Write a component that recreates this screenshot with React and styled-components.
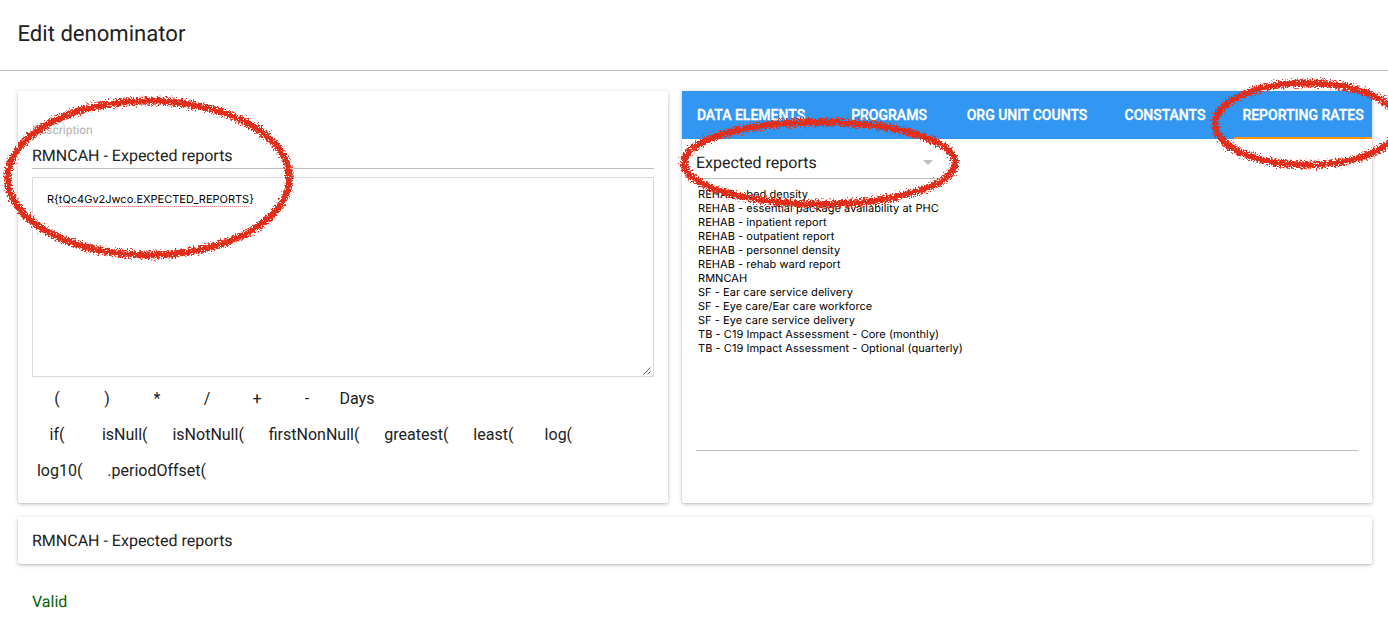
import React from "react";
import styled, { createGlobalStyle } from "styled-components";

const GlobalStyle = createGlobalStyle`
  *, *::before, *::after { box-sizing: border-box; }
  body {
    margin: 0;
    background: #fff;
    color: #212121;
    font: 400 16px/20px Roboto, "Liberation Sans", sans-serif;
    text-rendering: geometricPrecision;
    overflow: hidden;
  }
`;

const Page = styled.div`
  position: relative;
  height: 620px;
  overflow: hidden;
`;

const Header = styled.header`
  height: 71px;
  padding: 19px 17.5px 0;
  border-bottom: 1px solid #bdbdbd;
`;

const Title = styled.h1`
  margin: 0;
  font-size: 22.1px;
  line-height: 30px;
  font-weight: 400;
`;

const Content = styled.main`
  display: grid;
  grid-template-columns: 650px 690px;
  grid-template-rows: 412px 47px;
  gap: 14px;
  padding: 20px 16px 0 18px;
`;

const Card = styled.section`
  background: #fff;
  border-radius: 2px;
  box-shadow: 0 1px 5px rgba(0, 0, 0, 0.2), 0 1px 2px rgba(0, 0, 0, 0.12);
`;

const EditorCard = styled(Card)`
  padding: 32px 14px 0;
`;

const Label = styled.label`
  display: block;
  height: 14px;
  font-size: 12px;
  line-height: 14px;
  color: #b3b3b3;
`;

const Field = styled.div`
  height: 32px;
  padding-top: 9px;
  border-bottom: 1px solid #bdbdbd;
`;

const Formula = styled.div`
  display: flex;
  flex-direction: column;
  justify-content: space-between;
  height: 200px;
  margin-top: 8px;
  padding: 14px 0 0 14px;
  border: 1px solid #d9d9d9;
  color: #000;
  font: 400 11px/15px Inter, sans-serif;
`;

const Misspelled = styled.span`
  text-decoration: underline dotted #f58a8a 1px;
  text-underline-offset: 3px;
  text-decoration-skip-ink: none;
`;

const ResizeGrip = styled.svg`
  align-self: flex-end;
  display: block;
  width: 10px;
  height: 10px;
`;

const Buttons = styled.div`
  display: flex;
  flex-wrap: wrap;
  margin: ${(p) => (p.$wide ? "0 0 0 -7.5px" : "4px 0 0")};
`;

const InsertButton = styled.button`
  height: 36px;
  min-width: ${(p) => (p.$wide ? "65px" : "50px")};
  padding: ${(p) => (p.$wide ? "0 12.45px" : "0")};
  border: 0;
  background: none;
  color: inherit;
  font: inherit;
`;

const Tabs = styled.nav`
  display: grid;
  grid-template-columns: repeat(5, 1fr);
  height: 48px;
  background: #3296f3;
`;

const Tab = styled.button`
  padding: 2px 0 0;
  border: 0;
  border-bottom: 2px solid ${(p) => (p.$active ? "#ff9800" : "transparent")};
  background: none;
  color: #fff;
  font: 500 14px/20px Roboto, sans-serif;
  -webkit-text-stroke: 0.35px #fff;
  white-space: nowrap;
`;

const PickerBody = styled.div`
  padding: 0 14px;
`;

const Select = styled.div`
  display: flex;
  justify-content: space-between;
  align-items: center;
  width: 256px;
  height: 40px;
  padding: 8px 19px 0 0;
  border-bottom: 1px solid #bdbdbd;
`;

const Caret = styled.span`
  border: 5px solid transparent;
  border-top-color: #bdbdbd;
  border-bottom: 0;
`;

const Options = styled.ul`
  height: 272px;
  margin: 0;
  padding: 8px 2px 0;
  border-bottom: 1px solid #bdbdbd;
  list-style: none;
  color: #000;
  font: 400 11px/14px Inter, sans-serif;
  letter-spacing: 0.05px;
`;

const SummaryCard = styled(Card)`
  grid-column: 1 / -1;
  padding: 14px;
`;

const Status = styled.p`
  margin: 0;
  padding: 28px 32px 0;
  color: #006400;
`;

const Annotations = styled.svg`
  position: absolute;
  inset: 0;
  pointer-events: none;
`;

const operators = ["(", ")", "*", "/", "+", "-", "Days"];
const functions = [
  "if(", "isNull(", "isNotNull(", "firstNonNull(", "greatest(",
  "least(", "log(", "log10(", ".periodOffset(",
];
const tabs = ["DATA ELEMENTS", "PROGRAMS", "ORG UNIT COUNTS", "CONSTANTS", "REPORTING RATES"];
const reports = [
  "REHAB - bed density",
  "REHAB - essential package availability at PHC",
  "REHAB - inpatient report",
  "REHAB - outpatient report",
  "REHAB - personnel density",
  "REHAB - rehab ward report",
  "RMNCAH",
  "SF - Ear care service delivery",
  "SF - Eye care/Ear care workforce",
  "SF - Eye care service delivery",
  "TB - C19 Impact Assessment - Core (monthly)",
  "TB - C19 Impact Assessment - Optional (quarterly)",
];
const circles = [
  { cx: 148.5, cy: 178, rx: 141, ry: 77 },
  { cx: 819.5, cy: 163, rx: 135.5, ry: 41 },
  { cx: 1307, cy: 124, rx: 92, ry: 41 },
];

export default function App() {
  return (
    <Page>
      <GlobalStyle />
      <Header>
        <Title>Edit denominator</Title>
      </Header>
      <Content>
        <EditorCard>
          <Label>Description</Label>
          <Field>RMNCAH - Expected reports</Field>
          <Formula>
            <span>
              {"R{"}
              <Misspelled>tQc4Gv2Jwco.EXPECTED_REPORTS</Misspelled>
              {"}"}
            </span>
            <ResizeGrip viewBox="0 0 10 10" stroke="#555" strokeWidth="0.9">
              <path d="M0.5 8.5 7.5 1.5M4.5 8.5 7.5 5.5" />
            </ResizeGrip>
          </Formula>
          <Buttons>
            {operators.map((o) => <InsertButton key={o}>{o}</InsertButton>)}
          </Buttons>
          <Buttons $wide>
            {functions.map((f) => <InsertButton $wide key={f}>{f}</InsertButton>)}
          </Buttons>
        </EditorCard>
        <Card>
          <Tabs>
            {tabs.map((t, i) => <Tab key={t} $active={i === 4}>{t}</Tab>)}
          </Tabs>
          <PickerBody>
            <Select>
              Expected reports
              <Caret />
            </Select>
            <Options>
              {reports.map((r) => <li key={r}>{r}</li>)}
            </Options>
          </PickerBody>
        </Card>
        <SummaryCard>RMNCAH - Expected reports</SummaryCard>
      </Content>
      <Status>Valid</Status>
      <Annotations width="1388" height="620" fill="none">
        <defs>
          <filter id="crayon" filterUnits="userSpaceOnUse" x="0" y="60" width="1388" height="220" colorInterpolationFilters="sRGB">
            <feTurbulence type="fractalNoise" baseFrequency="0.6" numOctaves="3" seed="4" result="noise" />
            <feDisplacementMap in="SourceGraphic" in2="noise" scale="10" xChannelSelector="R" yChannelSelector="G" />
          </filter>
        </defs>
        <g filter="url(#crayon)" stroke="#e22d1a" strokeWidth="6.8">
          {circles.map((c) => <ellipse key={c.cx} {...c} />)}
        </g>
      </Annotations>
    </Page>
  );
}
